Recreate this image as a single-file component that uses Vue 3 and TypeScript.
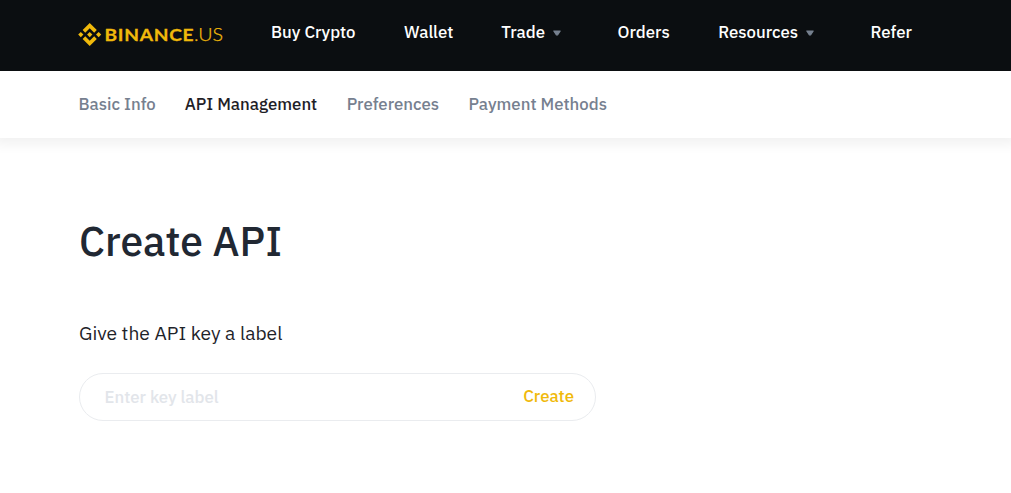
<script setup lang="ts">
import { ref } from 'vue';

interface NavItem {
  label: string;
  dropdown?: boolean;
}

const navItems: NavItem[] = [
  { label: 'Buy Crypto' },
  { label: 'Wallet' },
  { label: 'Trade', dropdown: true },
  { label: 'Orders' },
  { label: 'Resources', dropdown: true },
  { label: 'Refer' },
];

const tabs = ['Basic Info', 'API Management', 'Preferences', 'Payment Methods'];
const activeTab = ref('API Management');
const keyLabel = ref('');
</script>

<template>
  <div class="page">
    <header class="header">
      <svg class="logo" width="146" height="24" viewBox="0 0 146 24">
        <g transform="translate(0.2 0) scale(0.182)" fill="#f0b90b">
          <path d="M38.73 53.2 63.32 28.61 87.92 53.22 102.23 38.91 63.32 0 24.42 38.9z" />
          <path d="M0 63.31 14.3 49 28.61 63.31 14.3 77.62z" />
          <path d="M38.73 73.41 63.32 98 87.92 73.4 102.24 87.69 63.32 126.61 24.42 87.71 24.4 87.69z" />
          <path d="M98 63.31 112.3 49 126.61 63.3 112.3 77.62z" />
          <path d="M77.83 63.3 63.32 48.78 48.79 63.3 63.32 77.83z" />
        </g>
        <text class="brand" x="26.4" y="18" textLength="90" lengthAdjust="spacingAndGlyphs">BINANCE</text>
        <text class="brand-suffix" x="116" y="18" textLength="29" lengthAdjust="spacingAndGlyphs">.US</text>
      </svg>
      <nav class="nav">
        <a v-for="item in navItems" :key="item.label" class="nav-item">
          <span>{{ item.label }}</span>
          <svg v-if="item.dropdown" class="caret" width="10" height="7" viewBox="0 0 10 7">
            <path d="M1.8 1H8.2L5.6 4.8H4.4z" />
          </svg>
        </a>
      </nav>
    </header>

    <nav class="tabs">
      <a
        v-for="tab in tabs"
        :key="tab"
        :class="['tab', tab === activeTab ? 'tab-active' : '']"
        @click="activeTab = tab"
      >{{ tab }}</a>
    </nav>

    <main class="content">
      <h1 class="title">Create API</h1>
      <label class="label" for="key-label">Give the API key a label</label>
      <form class="field" @submit.prevent>
        <input id="key-label" v-model="keyLabel" class="input" placeholder="Enter key label" />
        <button class="create" type="submit">Create</button>
      </form>
    </main>
  </div>
</template>

<style>
body {
  margin: 0;
  background: #fff;
}
</style>

<style scoped>
.page {
  height: 493px;
  overflow: hidden;
  background: #fff;
  color: #1e2329;
  font-family: "IBM Plex Sans", Roboto, "Liberation Sans", sans-serif;
  font-size: 16.8px;
  font-weight: 500;
}

.header {
  display: flex;
  box-sizing: border-box;
  height: 71px;
  padding: 22px 0 0 78px;
  background: #0b0e11;
}

.logo {
  flex: none;
  width: 146px;
  height: 24px;
  margin-top: 1px;
  margin-right: 47px;
  overflow: visible;
}

.brand,
.brand-suffix {
  fill: #f0b90b;
  stroke: #f0b90b;
  font-family: Lato, sans-serif;
  font-size: 17.8px;
}

.brand {
  stroke-width: 0.3;
  font-weight: 700;
  letter-spacing: 0.7px;
}

.brand-suffix {
  stroke-width: 0.25;
  font-weight: 300;
}

.nav {
  display: grid;
  grid-template-columns: 133px 97.3px 116.2px 100.7px 152.3px 50px;
  height: 21px;
  line-height: 21px;
  color: #fff;
}

.nav-item {
  display: flex;
  align-items: center;
  gap: 7px;
  white-space: nowrap;
  cursor: pointer;
}

.caret path {
  fill: #76808f;
  stroke: #76808f;
  stroke-width: 1.2;
  stroke-linejoin: round;
}

.caret {
  margin-top: 2px;
}

.tabs {
  display: grid;
  grid-template-columns: 106.2px 162px 121.8px 150px;
  height: 67px;
  padding-left: 78.5px;
  line-height: 67px;
  box-shadow: 0 0 12px 6px rgba(0, 0, 0, 0.06);
  clip-path: inset(0 0 -24px 0);
}

.tab {
  color: #76808f;
  white-space: nowrap;
  cursor: pointer;
}

.tab-active {
  color: #1e2026;
}

.content {
  display: flex;
  flex-direction: column;
  width: 517px;
  padding: 77px 0 0 79px;
}

.title {
  margin: 0;
  color: #212833;
  font-size: 40.9px;
  font-weight: 500;
  line-height: 52px;
}

.label {
  margin-top: 54px;
  font-size: 19.25px;
  font-weight: 400;
  line-height: 24px;
}

.field {
  display: flex;
  align-items: center;
  box-sizing: border-box;
  height: 48px;
  margin-top: 28px;
  padding: 0 21px 0 24.5px;
  border: 1px solid #eaecef;
  border-radius: 24px;
}

.input {
  flex: 1;
  min-width: 0;
  padding: 0;
  border: 0;
  outline: 0;
  background: transparent;
  color: #1e2329;
  font: inherit;
}

.input::placeholder {
  color: #e2e5ea;
  opacity: 1;
}

.create {
  padding: 0 0 2px;
  border: 0;
  background: transparent;
  color: #f0b90b;
  font: inherit;
  cursor: pointer;
}
</style>
